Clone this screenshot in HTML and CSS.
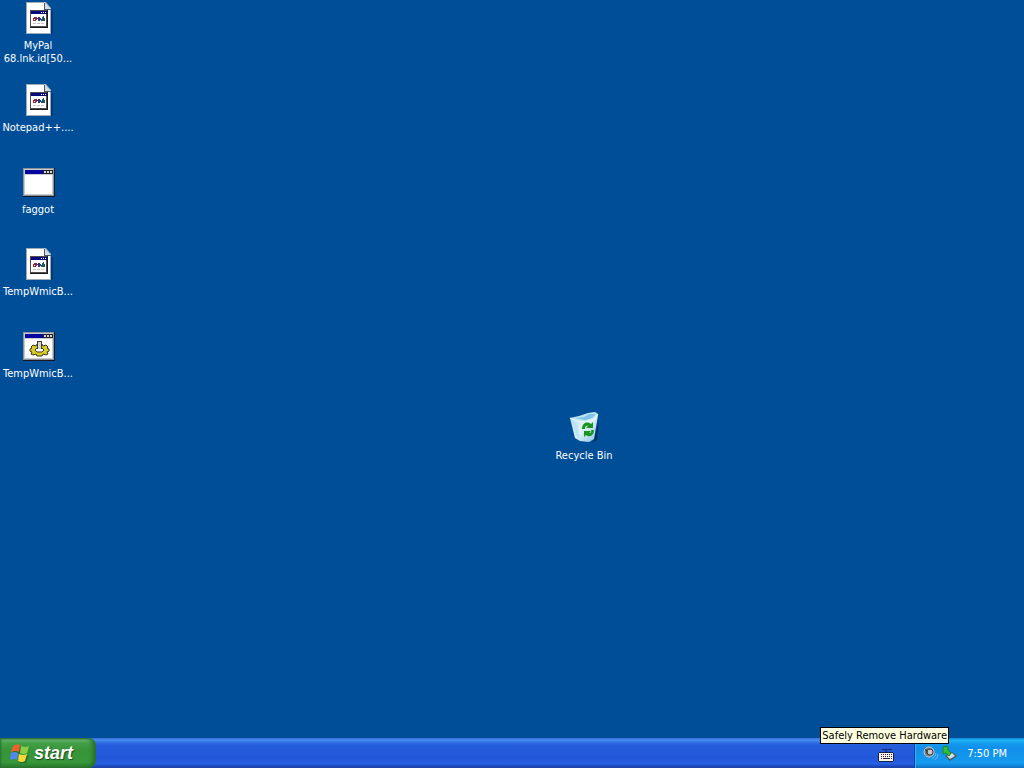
FILE: index.html
```html
<!DOCTYPE html>
<html lang="en">
<head>
<meta charset="utf-8">
<title>Desktop</title>
<link rel="stylesheet" href="styles.css">
</head>
<body>
<svg class="defs" aria-hidden="true">
  <defs>
    <symbol id="doc" viewBox="0 0 32 32">
      <path d="M5 32h24V9" fill="none" stroke="#00285c" stroke-width="1"/>
      <path d="M3 0h20l5 6v26H3z" fill="#9cabb8"/>
      <path d="M4 1h18l5 6v24H4z" fill="#fff"/>
      <path d="M21 0l7 7h-7z" fill="#d5dce2"/>
      <path d="M21 7h7v1h-7zM21 1h1v6h-1z" fill="#4b5964"/>
      <path d="M7 8h18v18H7z" fill="#1c1c1c"/>
      <path d="M7 8h17v17H7z" fill="#4d4d4d"/>
      <path d="M8 12h15v12H8z" fill="#fff"/>
      <path d="M8 9h16v3H8z" fill="#080880"/>
      <path d="M18 10h1v1h-1zM20 10h1v1h-1zM22 10h1v1h-1z" fill="#fff"/>
      <path d="M10 16h1v-1h3v3h-1v1h-3z" fill="#9c2638"/>
      <path d="M11 17h1v1h-1z" fill="#fff"/>
      <path d="M15 15h2v1h1v2h-1v1h-2v-2h-1v-1h1z" fill="#26308f"/>
      <path d="M20 14h1v2h1v3h-4v-2h1v-2h1z" fill="#1c5c50"/>
      <path d="M10 21h3v1h-3zM14 21h3v1h-3zM18 21h3v1h-3z" fill="#c5c5c5"/>
    </symbol>
    <symbol id="win" viewBox="0 0 32 32">
      <path d="M0 2h32v29H0z" fill="#181820"/>
      <path d="M0 2h31v28H0z" fill="#8d929a"/>
      <path d="M1 3h29v26H1z" fill="#c7cbd0"/>
      <path d="M2 4h28v4H2z" fill="#0505a0"/>
      <path d="M2 9h27v19H2z" fill="#fff"/>
      <path d="M20 4h10v4H20z" fill="#20202c"/>
      <path d="M21 5h2v2h-2zM24 5h2v2h-2zM27 5h2v2h-2z" fill="#d7d7cc"/>
    </symbol>
  </defs>
</svg>
<main class="desktop">
  <div class="icons">
    <a class="item" href="#"><svg class="pic"><use href="#doc"/></svg><span class="label">MyPal 68.lnk.id[50...</span></a>
    <a class="item" href="#"><svg class="pic"><use href="#doc"/></svg><span class="label">Notepad++....</span></a>
    <a class="item" href="#"><svg class="pic"><use href="#win"/></svg><span class="label">faggot</span></a>
    <a class="item" href="#"><svg class="pic"><use href="#doc"/></svg><span class="label">TempWmicB...</span></a>
    <a class="item" href="#"><svg class="pic" viewBox="0 0 32 32"><use href="#win" width="32" height="32"/>
      <path d="M8 17l2-2 3 1 1-2h5l1 2 3-1 2 2-1 1 2 1v2l-2 1 1 2-2 1-3-1-1 2h-5l-1-2-3 1-2-1 1-2-2-1v-2l2-1z" fill="#d9cc28" stroke="#38381a"/>
      <path d="M12 20l2-2h5l2 2-2 2h-5z" fill="#fff" stroke="#38381a"/>
      <path d="M14 11h5v8h-5z" fill="#3b3b34"/>
      <path d="M15 12h3v7h-3z" fill="#d6d8d0"/></svg><span class="label">TempWmicB...</span></a>
  </div>
  <a class="item recycle" href="#">
    <svg class="pic" viewBox="0 0 32 32">
      <defs><linearGradient id="bin" x1="0" x2="1" y2="1"><stop stop-color="#a9ddf4"/><stop offset=".5" stop-color="#e4f3f8"/><stop offset="1" stop-color="#83c3e3"/></linearGradient></defs>
      <path d="M25 28l5-20-2 20-5 3z" fill="#003062"/>
      <path d="M1 6l9 1 7-4 8-2 4 2-4 24-5 3-9-1-5-3z" fill="url(#bin)"/>
      <path d="M1 6l9-2 9-3 7-1 3 2-4 5-8 3-9-1z" fill="#bfe5f5"/>
      <path d="M6 6l9-1 5-3h7l-4 4-7 2z" fill="#7fc4e6"/>
      <path d="M1 6l7 3 8 1 9-3 4-5" fill="none" stroke="#eefaff"/>
      <path d="M3 9l4 15 4 3-3-16z" fill="#b5e1f4" opacity=".8"/>
      <path d="M13 17c0-6 5-8 9-5l2-2v6h-7l2-2c-2-1-3 1-3 3zM25 18c0 5-4 8-8 5l-2 2v-6h7l-2 2c2 0 3-1 2-3z" fill="#16951f"/>
    </svg>
    <span class="label">Recycle Bin</span>
  </a>
</main>
<footer class="taskbar">
  <button class="start" type="button">
    <svg class="flag" viewBox="0 0 20 20">
      <path d="M4 5q4-3 7-1l-1 7q-4-2-8 0z" fill="#1d5724" opacity=".6"/>
      <path d="M9 13q5 2 10-1l-3 8q-3 1-8-1z" fill="#1d5724" opacity=".6"/>
      <path d="M3 3q4-3 7-1l-1 7q-4-2-8 0z" fill="#f0602f"/>
      <path d="M11 3q4 2 8 0l-2 7q-3 2-7 0z" fill="#8bd044"/>
      <path d="M1 10q4-2 7 0l-1 7q-3-2-7 0z" fill="#4f86f2"/>
      <path d="M9 11q4 2 8 0l-2 7q-3 2-7 0z" fill="#fbd736"/>
    </svg>
    <span>start</span>
  </button>
  <div class="tasks"></div>
  <button class="keyboard" type="button" aria-label="Keyboard">
    <svg viewBox="0 0 16 16">
      <path d="M4 2l2 1 2-1 2 1 2-1 2 1M8 3v2" fill="none" stroke="#14265d"/>
      <path d="M1 5h14v1h1v8h-1v1H1v-1H0V6h1z" fill="#182044"/>
      <path d="M1 6h14v8H1z" fill="#f5f5ee"/>
      <path d="M3 7h1v1h-1zM5 7h1v1h-1zM7 7h1v1h-1zM9 7h1v1h-1zM11 7h1v1h-1zM13 7h1v1h-1zM3 9h1v1h-1zM5 9h1v1h-1zM7 9h1v1h-1zM9 9h1v1h-1zM11 9h1v1h-1zM13 9h1v1h-1zM3 11h1v1h-1zM5 11h7v1h-7zM13 11h1v1h-1z" fill="#3c2038"/>
    </svg>
  </button>
  <div class="tray">
    <svg class="trayicon" viewBox="0 0 16 16">
      <circle cx="6" cy="7" r="5" fill="#75797b" stroke="#c5cdce"/>
      <circle cx="7" cy="7" r="3" fill="#c4c8c9" stroke="#3b4148"/>
      <path d="M2 4l3 1-1 4z" fill="#3d4248"/>
      <path d="M9 14q4-2 4-6M12 15q3-2 3-6" fill="none" stroke="#75b8ef"/>
    </svg>
    <svg class="trayicon" viewBox="0 0 16 16">
      <path d="M3 11l7-4 5 4-7 5z" fill="#465b65"/>
      <path d="M5 11l5-3 3 3-5 3z" fill="#d8dfdf"/>
      <path d="M1 2l5-1v4l3 3-2 3-3-3-3 1z" fill="#36bd38" stroke="#168a2c" stroke-width="1"/>
    </svg>
    <time class="clock">7:50 PM</time>
  </div>
  <div class="tooltip" role="tooltip">Safely Remove Hardware</div>
</footer>
</body>
</html>
```
FILE: styles.css
```css
* { box-sizing: border-box; }
body {
  margin: 0;
  min-height: 100vh;
  display: flex;
  flex-direction: column;
  background: #004e98;
  color: #fff;
  font: 11px/13px Tahoma, "DejaVu Sans Condensed", "DejaVu Sans", sans-serif;
}
button { font: inherit; color: inherit; border: 0; padding: 0; background: none; }
.defs { position: absolute; width: 0; height: 0; }
.desktop { position: relative; flex: 1; }
.icons { display: grid; grid-auto-rows: 82px; width: 76px; }
.item {
  display: flex;
  flex-direction: column;
  align-items: center;
  gap: 5px;
  width: 76px;
  padding-top: 2px;
  color: #fff;
  text-decoration: none;
  text-align: center;
}
.pic { width: 32px; height: 32px; margin-left: 2px; flex: none; }
.label { max-width: 76px; }
.recycle { position: absolute; left: 546px; top: 410px; }
.taskbar {
  position: relative;
  display: flex;
  height: 30px;
  background: linear-gradient(#3168d5 0, #4990f0 2px, #3474e8 4px, #245ddb 7px, #2258d8 20px, #265fe3 26px, #1c48b8 28px, #1941a5 30px);
}
.start {
  display: flex;
  align-items: center;
  gap: 4px;
  width: 96px;
  padding-left: 10px;
  border-radius: 0 8px 8px 0;
  background: linear-gradient(#3c8043 0, #6eb873 2px, #43a047 5px, #379438 12px, #36983a 24px, #2c7a2e 30px);
  box-shadow: inset -3px 0 4px #246d2b, inset 1px 0 2px #2c7434;
  font: italic bold 18px/24px "Liberation Sans", sans-serif;
  text-shadow: 1px 1px 1px #1d4b20;
}
.flag { width: 20px; height: 20px; }
.tasks { flex: 1; }
.keyboard { display: flex; align-items: center; width: 16px; margin-right: 20px; padding-top: 4px; }
.keyboard svg { display: block; width: 16px; height: 16px; }
.tray {
  display: flex;
  align-items: center;
  gap: 3px;
  width: 110px;
  padding: 0 17px 0 8px;
  border-left: 1px solid #0d3ba3;
  background: linear-gradient(#0c7bcd 0, #1fb5f4 2px, #169cee 5px, #118fe9 10px, #159bf0 25px, #0f71c5 30px);
  box-shadow: inset 1px 0 #22baf5;
}
.trayicon { width: 16px; height: 16px; flex: none; }
.clock { margin-left: auto; white-space: nowrap; }
.tooltip {
  position: absolute;
  right: 75px;
  bottom: 24px;
  padding: 1px;
  border: 1px solid #000;
  background: #ffffe1;
  color: #000;
  white-space: nowrap;
}
```
